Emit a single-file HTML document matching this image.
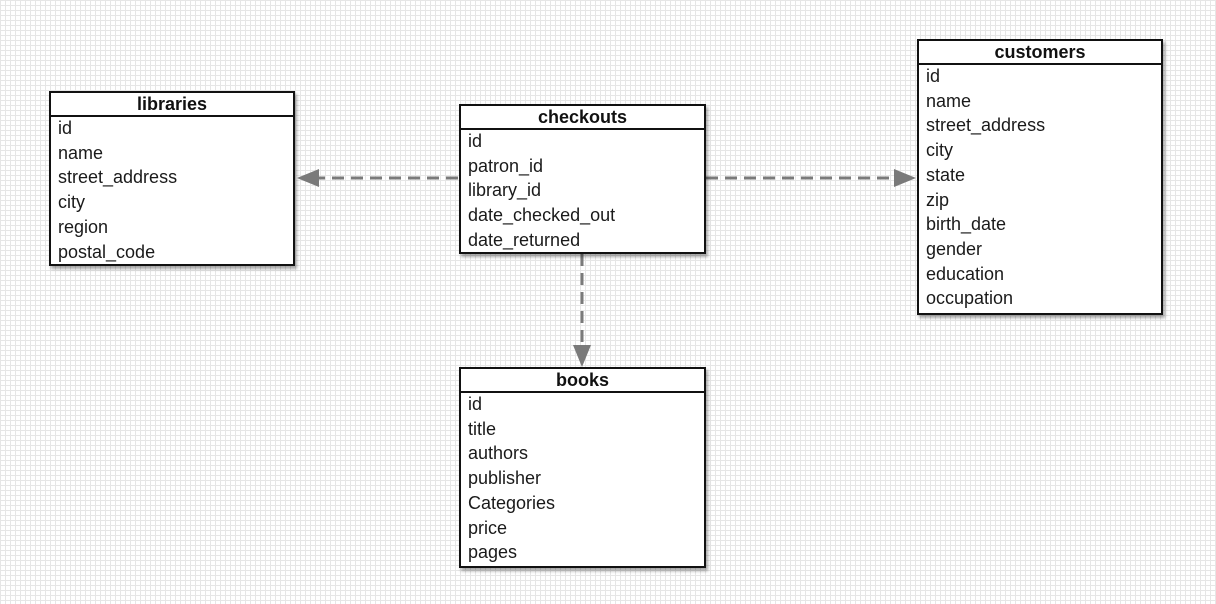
<!DOCTYPE html>
<html><head><meta charset="utf-8"><style>
html,body{margin:0;padding:0}
body{width:1216px;height:604px;overflow:hidden;position:relative;background-color:#fff;
background-image:linear-gradient(#e6e6e6 1px,transparent 1px),linear-gradient(90deg,#e6e6e6 1px,transparent 1px);
background-size:5px 5px;font-family:"Liberation Sans",Arial,sans-serif;}
.t{position:absolute;background:#fff;border:2px solid #111;box-sizing:border-box;box-shadow:2px 3px 3px rgba(0,0,0,.35);}
.h{height:22px;border-bottom:2px solid #111;text-align:center;font-weight:bold;font-size:18px;line-height:22px;color:#111}
.r{font-size:18px;line-height:24.7px;padding-left:7px;color:#1a1a1a;white-space:nowrap;margin-top:-1px;margin-bottom:1px}
svg{position:absolute;left:0;top:0}
</style></head><body>
<svg width="1216" height="604">
<g stroke="#7a7a7a" stroke-width="3" stroke-dasharray="12,7" fill="none">
<line x1="458" y1="178" x2="318" y2="178"/>
<line x1="706" y1="178" x2="896" y2="178"/>
<line x1="582" y1="254" x2="582" y2="346"/>
</g>
<g fill="#7a7a7a">
<polygon points="297,178 319,169 319,187"/>
<polygon points="916,178 894,169 894,187"/>
<polygon points="582,367 573,345 591,345"/>
</g>
</svg>
<div class="t" style="left:49px;top:91px;width:246px;height:175px">
<div class="h">libraries</div>
<div class="r">id</div><div class="r">name</div><div class="r">street_address</div><div class="r">city</div><div class="r">region</div><div class="r">postal_code</div>
</div>
<div class="t" style="left:459px;top:104px;width:247px;height:150px">
<div class="h">checkouts</div>
<div class="r">id</div><div class="r">patron_id</div><div class="r">library_id</div><div class="r">date_checked_out</div><div class="r">date_returned</div>
</div>
<div class="t" style="left:917px;top:39px;width:246px;height:276px">
<div class="h">customers</div>
<div class="r">id</div><div class="r">name</div><div class="r">street_address</div><div class="r">city</div><div class="r">state</div><div class="r">zip</div><div class="r">birth_date</div><div class="r">gender</div><div class="r">education</div><div class="r">occupation</div>
</div>
<div class="t" style="left:459px;top:367px;width:247px;height:201px">
<div class="h">books</div>
<div class="r">id</div><div class="r">title</div><div class="r">authors</div><div class="r">publisher</div><div class="r">Categories</div><div class="r">price</div><div class="r">pages</div>
</div>
</body></html>
